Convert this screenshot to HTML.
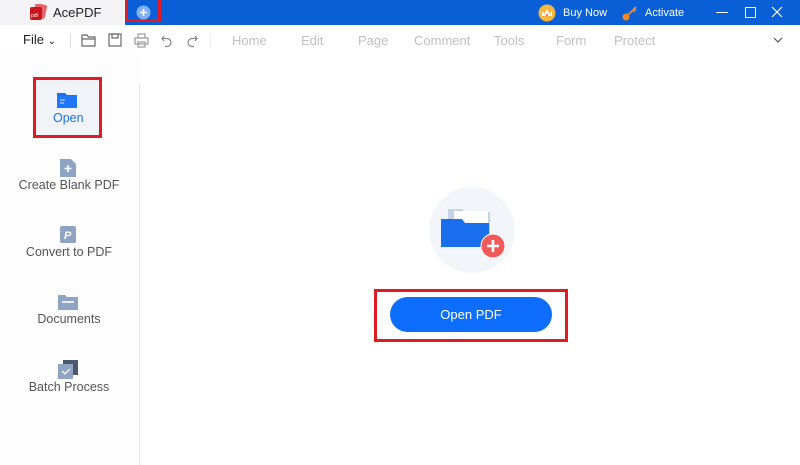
<!DOCTYPE html>
<html><head><style>
body{margin:0;width:800px;height:465px;overflow:hidden;font-family:"Liberation Sans",sans-serif;background:#fff;position:relative}
.a{position:absolute}
.t{font-size:13px;color:#c0c0c0}
.side{font-size:12.5px;color:#555;text-align:center;width:140px;left:-1px}
</style></head><body>
<div class="a" style="left:0;top:0;width:800px;height:25px;background:#0a5fd6"></div>
<div class="a" style="left:0;top:0;width:125px;height:25px;background:#f3f3f5"></div>
<svg class="a" style="left:29px;top:4px" width="18" height="17" viewBox="0 0 18 17"><rect x="5" y="0" width="12" height="14" rx="2" fill="#e8626a" transform="rotate(12 11 7)"/><rect x="1" y="3" width="12" height="13" rx="2" fill="#c8161e"/><text x="2" y="13" font-size="5" fill="#fff" font-family="Liberation Sans">pdf</text></svg>
<div class="a" style="left:53px;top:5px;font-size:13px;color:#222">AcePDF</div>
<div class="a" style="left:125px;top:0;width:30px;height:19px;border:3px solid #e01b24;border-top:0;background:#0a5fd6;box-sizing:content-box"></div>
<svg class="a" style="left:136px;top:5px" width="15" height="15"><circle cx="7.5" cy="7.5" r="7" fill="#7fb0ff"/><path d="M7.5 4v7M4 7.5h7" stroke="#fff" stroke-width="1.6"/></svg>
<svg class="a" style="left:538px;top:4px" width="18" height="18"><circle cx="9" cy="9" r="8.5" fill="#f6b73c"/><path d="M4 7l2.5 3L9 5l2.5 5L14 7v5H4z" fill="#fff"/><circle cx="9" cy="11" r="1" fill="#e44"/></svg>
<div class="a" style="left:563px;top:7px;font-size:11px;color:#fff">Buy Now</div>
<svg class="a" style="left:621px;top:4px" width="18" height="18"><circle cx="5" cy="13" r="3.5" fill="#f08a24"/><path d="M7 11l8-8M12 6l2 2M13.5 4.5l1.5 1.5" stroke="#f08a24" stroke-width="1.6"/></svg>
<div class="a" style="left:645px;top:7px;font-size:11px;color:#fff">Activate</div>
<div class="a" style="left:716px;top:12px;width:12px;height:1px;background:#fff"></div>
<div class="a" style="left:745px;top:7px;width:9px;height:9px;border:1px solid #fff"></div>
<svg class="a" style="left:771px;top:6px" width="12" height="12"><path d="M1 1l10 10M11 1L1 11" stroke="#fff" stroke-width="1.2"/></svg>
<div class="a" style="left:23px;top:32px;font-size:13px;color:#222">File <span style="font-size:10px">⌄</span></div>
<div class="a" style="left:70px;top:33px;width:1px;height:15px;background:#ddd"></div>
<svg class="a" style="left:80px;top:31px" width="125" height="18" fill="none" stroke="#666" stroke-width="1.2">
<path d="M2 4h5l1.5 2H15v9H2z M2 8h13"/>
<rect x="29" y="3" width="12" height="12"/><rect x="32" y="3" width="6" height="4"/>
<rect x="55" y="7" width="13" height="6" stroke="#999"/><rect x="58" y="3" width="7" height="4" stroke="#999"/><rect x="58" y="11" width="7" height="5" stroke="#999"/>
<path d="M84 5l-2 2.5 2 2.5M82 7.5h5a4 4 0 010 8h-2" stroke="#888"/>
<path d="M115 5l2 2.5-2 2.5M117 7.5h-5a4 4 0 000 8h2" stroke="#888"/>
</svg>
<div class="a" style="left:210px;top:33px;width:1px;height:15px;background:#eee"></div>
<div class="a t" style="left:232px;top:33px">Home</div>
<div class="a t" style="left:301px;top:33px">Edit</div>
<div class="a t" style="left:358px;top:33px">Page</div>
<div class="a t" style="left:414px;top:33px">Comment</div>
<div class="a t" style="left:494px;top:33px">Tools</div>
<div class="a t" style="left:556px;top:33px">Form</div>
<div class="a t" style="left:614px;top:33px">Protect</div>
<svg class="a" style="left:773px;top:36px" width="10" height="8"><path d="M1 2l4 4 4-4" stroke="#555" fill="none" stroke-width="1.2"/></svg>
<div class="a" style="left:0;top:55px;width:139px;height:410px;background:#fdfdfe"></div>
<div class="a" style="left:139px;top:83px;width:1px;height:382px;background:#e6e6e6"></div>
<div class="a" style="left:33px;top:77px;width:63px;height:55px;border:3px solid #e01b24;background:#f0f3f8"></div>
<svg class="a" style="left:57px;top:92px" width="22" height="17"><path d="M0 1h8l2 2h10v13H0z" fill="#1a6fef"/><rect x="0" y="4" width="20" height="12" fill="#1d78ff"/><path d="M3 8h5M3 11h4" stroke="#cfe0ff"/></svg>
<div class="a" style="left:53px;top:111px;font-size:12.5px;color:#1a6fef">Open</div>
<svg class="a" style="left:60px;top:159px" width="16" height="18"><path d="M0 0h11l5 5v13H0z" fill="#8fa3c2"/><path d="M8 6v7M4.5 9.5h7" stroke="#fff" stroke-width="1.6"/></svg>
<div class="a side" style="top:178px">Create Blank PDF</div>
<svg class="a" style="left:60px;top:226px" width="16" height="17"><rect width="16" height="17" rx="2" fill="#8fa3c2"/><text x="4" y="13" font-size="11" font-style="italic" font-weight="bold" fill="#fff" font-family="Liberation Sans">P</text></svg>
<div class="a side" style="top:245px">Convert to PDF</div>
<svg class="a" style="left:58px;top:293px" width="20" height="17"><path d="M0 2h7l2 2h11v13H0z" fill="#8fa3c2"/><path d="M4 9h12" stroke="#fff" stroke-width="1.6"/></svg>
<div class="a side" style="top:312px">Documents</div>
<svg class="a" style="left:58px;top:360px" width="20" height="19"><rect x="5" y="0" width="15" height="15" fill="#4d5a6e"/><rect x="0" y="4" width="15" height="15" fill="#8fa3c2"/><path d="M4 11l3 3 5-5" stroke="#fff" fill="none" stroke-width="1.3"/></svg>
<div class="a side" style="top:380px">Batch Process</div>
<div class="a" style="left:429px;top:187px;width:86px;height:86px;border-radius:50%;background:#f2f6fb"></div>
<svg class="a" style="left:440px;top:206px" width="70" height="55"><path d="M8 3h14l3 3h25v26H8z" fill="#c5d3e8"/><rect x="14" y="5" width="34" height="26" fill="#fff"/><path d="M1 13h21l3 4h24v24H1z" fill="#1a6fef"/><circle cx="53" cy="40" r="12" fill="#f05a5a" stroke="#fff" stroke-width="1"/><path d="M53 34v12M47 40h12" stroke="#fff" stroke-width="2.6"/></svg>
<div class="a" style="left:374px;top:289px;width:188px;height:47px;border:3px solid #e01b24"></div>
<div class="a" style="left:390px;top:297px;width:162px;height:35px;border-radius:18px;background:#0d6efd;color:#fff;font-size:13px;text-align:center;line-height:35px">Open PDF</div>
</body></html>
